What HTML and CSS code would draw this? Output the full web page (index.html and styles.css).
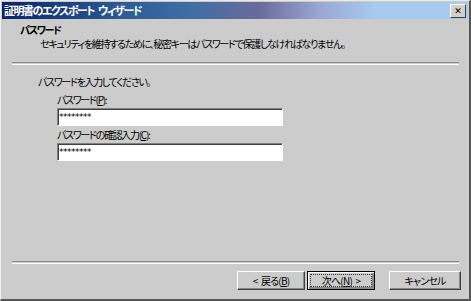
FILE: index.html
```html
<!DOCTYPE html>
<html>
<head>
    <title>証明書のエクスポート ウィザード</title>
    <meta charset="utf-8">
    <link rel="stylesheet" href="styles.css">
</head>
<body>
    <div class="window">
        <div class="titlebar">
            <span class="title">証明書のエクスポート ウィザード</span>
            <button class="close">&#x2715;</button>
        </div>
        <div class="header">
            <div class="heading">パスワード</div>
            <div class="subheading">セキュリティを維持するために、秘密キーはパスワードで保護しなければなりません。</div>
        </div>
        <div class="rule"></div>
        <div class="content">
            <p class="intro">パスワードを入力してください。</p>
            <div class="field">
                <label for="pw1">パスワード(<u>P</u>):</label>
                <input type="text" id="pw1" value="********">
            </div>
            <div class="field">
                <label for="pw2">パスワードの確認入力(<u>C</u>):</label>
                <input type="text" id="pw2" value="********">
            </div>
        </div>
        <div class="rule"></div>
        <div class="buttons">
            <button class="btn">&lt; 戻る(<u>B</u>)</button>
            <button class="btn default">次へ(<u>N</u>) &gt;</button>
            <button class="btn cancel">キャンセル</button>
        </div>
    </div>
</body>
</html>
```

FILE: styles.css
```css
body {
    margin: 0;
    font-family: "Noto Sans CJK JP", "DejaVu Sans", sans-serif;
    font-size: 10px;
    font-feature-settings: "palt";
    letter-spacing: -1.3px;
    color: #000;
    background: #cccccc;
}
.window {
    width: 471px;
    height: 301px;
    box-sizing: border-box;
    display: flex;
    flex-direction: column;
    background: #cccccc;
    border-top: 1px solid #e8e8e8;
    border-left: 1px solid #f4f4f4;
    border-right: 2px solid #555;
    border-bottom: 2px solid #555;
}
.titlebar {
    height: 17px;
    margin: 1px 1px 0 1px;
    display: flex;
    align-items: center;
    justify-content: space-between;
    padding: 0 2px 0 2px;
    background: linear-gradient(to right, #0a246a 0%, #2b5a96 25%, #3d6ea3 40%, #6a6a9c 55%, #9aa6d4 68%, #a6caf0 80%, #a6caf0 100%);
}
.title {
    color: #fff;
    font-weight: bold;
    font-size: 11px;
    letter-spacing: -1.5px;
    word-spacing: 3px;
    line-height: 17px;
}
.close {
    width: 16px;
    height: 14px;
    padding: 0;
    font-size: 9px;
    font-weight: bold;
    line-height: 10px;
    letter-spacing: 0;
    background: #d4d0c8;
    border: 1px solid;
    border-color: #fff #404040 #404040 #fff;
    font-family: "DejaVu Sans", sans-serif;
}
.header {
    height: 43px;
    padding: 4px 0 0 19px;
    box-sizing: border-box;
}
.heading {
    font-weight: bold;
    line-height: 13px;
}
.subheading {
    padding-left: 20px;
    line-height: 16px;
}
.rule {
    margin: 0 10px 0 11px;
    height: 1px;
    border-top: 1px solid #8c8c8c;
    border-bottom: 1px solid #fafafa;
}
.content {
    flex: 1;
    padding: 9px 0 0 37px;
}
.intro {
    margin: 0 0 2px 0;
    line-height: 16px;
}
.field {
    padding-left: 19px;
    margin-bottom: 1px;
}
.field label {
    display: block;
    line-height: 16px;
}
.field input {
    width: 226px;
    height: 18px;
    box-sizing: border-box;
    margin: 0;
    padding: 0 1px;
    font-family: "DejaVu Sans", sans-serif;
    font-size: 9px;
    letter-spacing: -0.5px;
    background: #fff;
    border: 1px solid;
    border-color: #808080 #fff #fff #808080;
    box-shadow: inset 1px 1px 0 #404040;
    outline: none;
}
.buttons {
    height: 33px;
    display: flex;
    align-items: center;
    padding: 0 8px 2px 0;
    justify-content: flex-end;
    gap: 2px;
}
.btn {
    width: 68px;
    height: 19px;
    padding: 0;
    font-family: "Noto Sans CJK JP", sans-serif;
    font-size: 10px;
    font-feature-settings: "palt";
    letter-spacing: -0.8px;
    word-spacing: 2px;
    line-height: 15px;
    background: #cccccc;
    border: 1px solid;
    border-color: #fff #404040 #404040 #fff;
    box-shadow: inset -1px -1px 0 #888;
}
.btn.default {
    border: 1px solid #000;
    box-shadow: inset 1px 1px 0 #fff, inset -2px -2px 0 #888;
    outline: 1px dotted #333;
    outline-offset: -4px;
}
.btn.cancel {
    width: 72px;
    margin-left: 12px;
}
```
